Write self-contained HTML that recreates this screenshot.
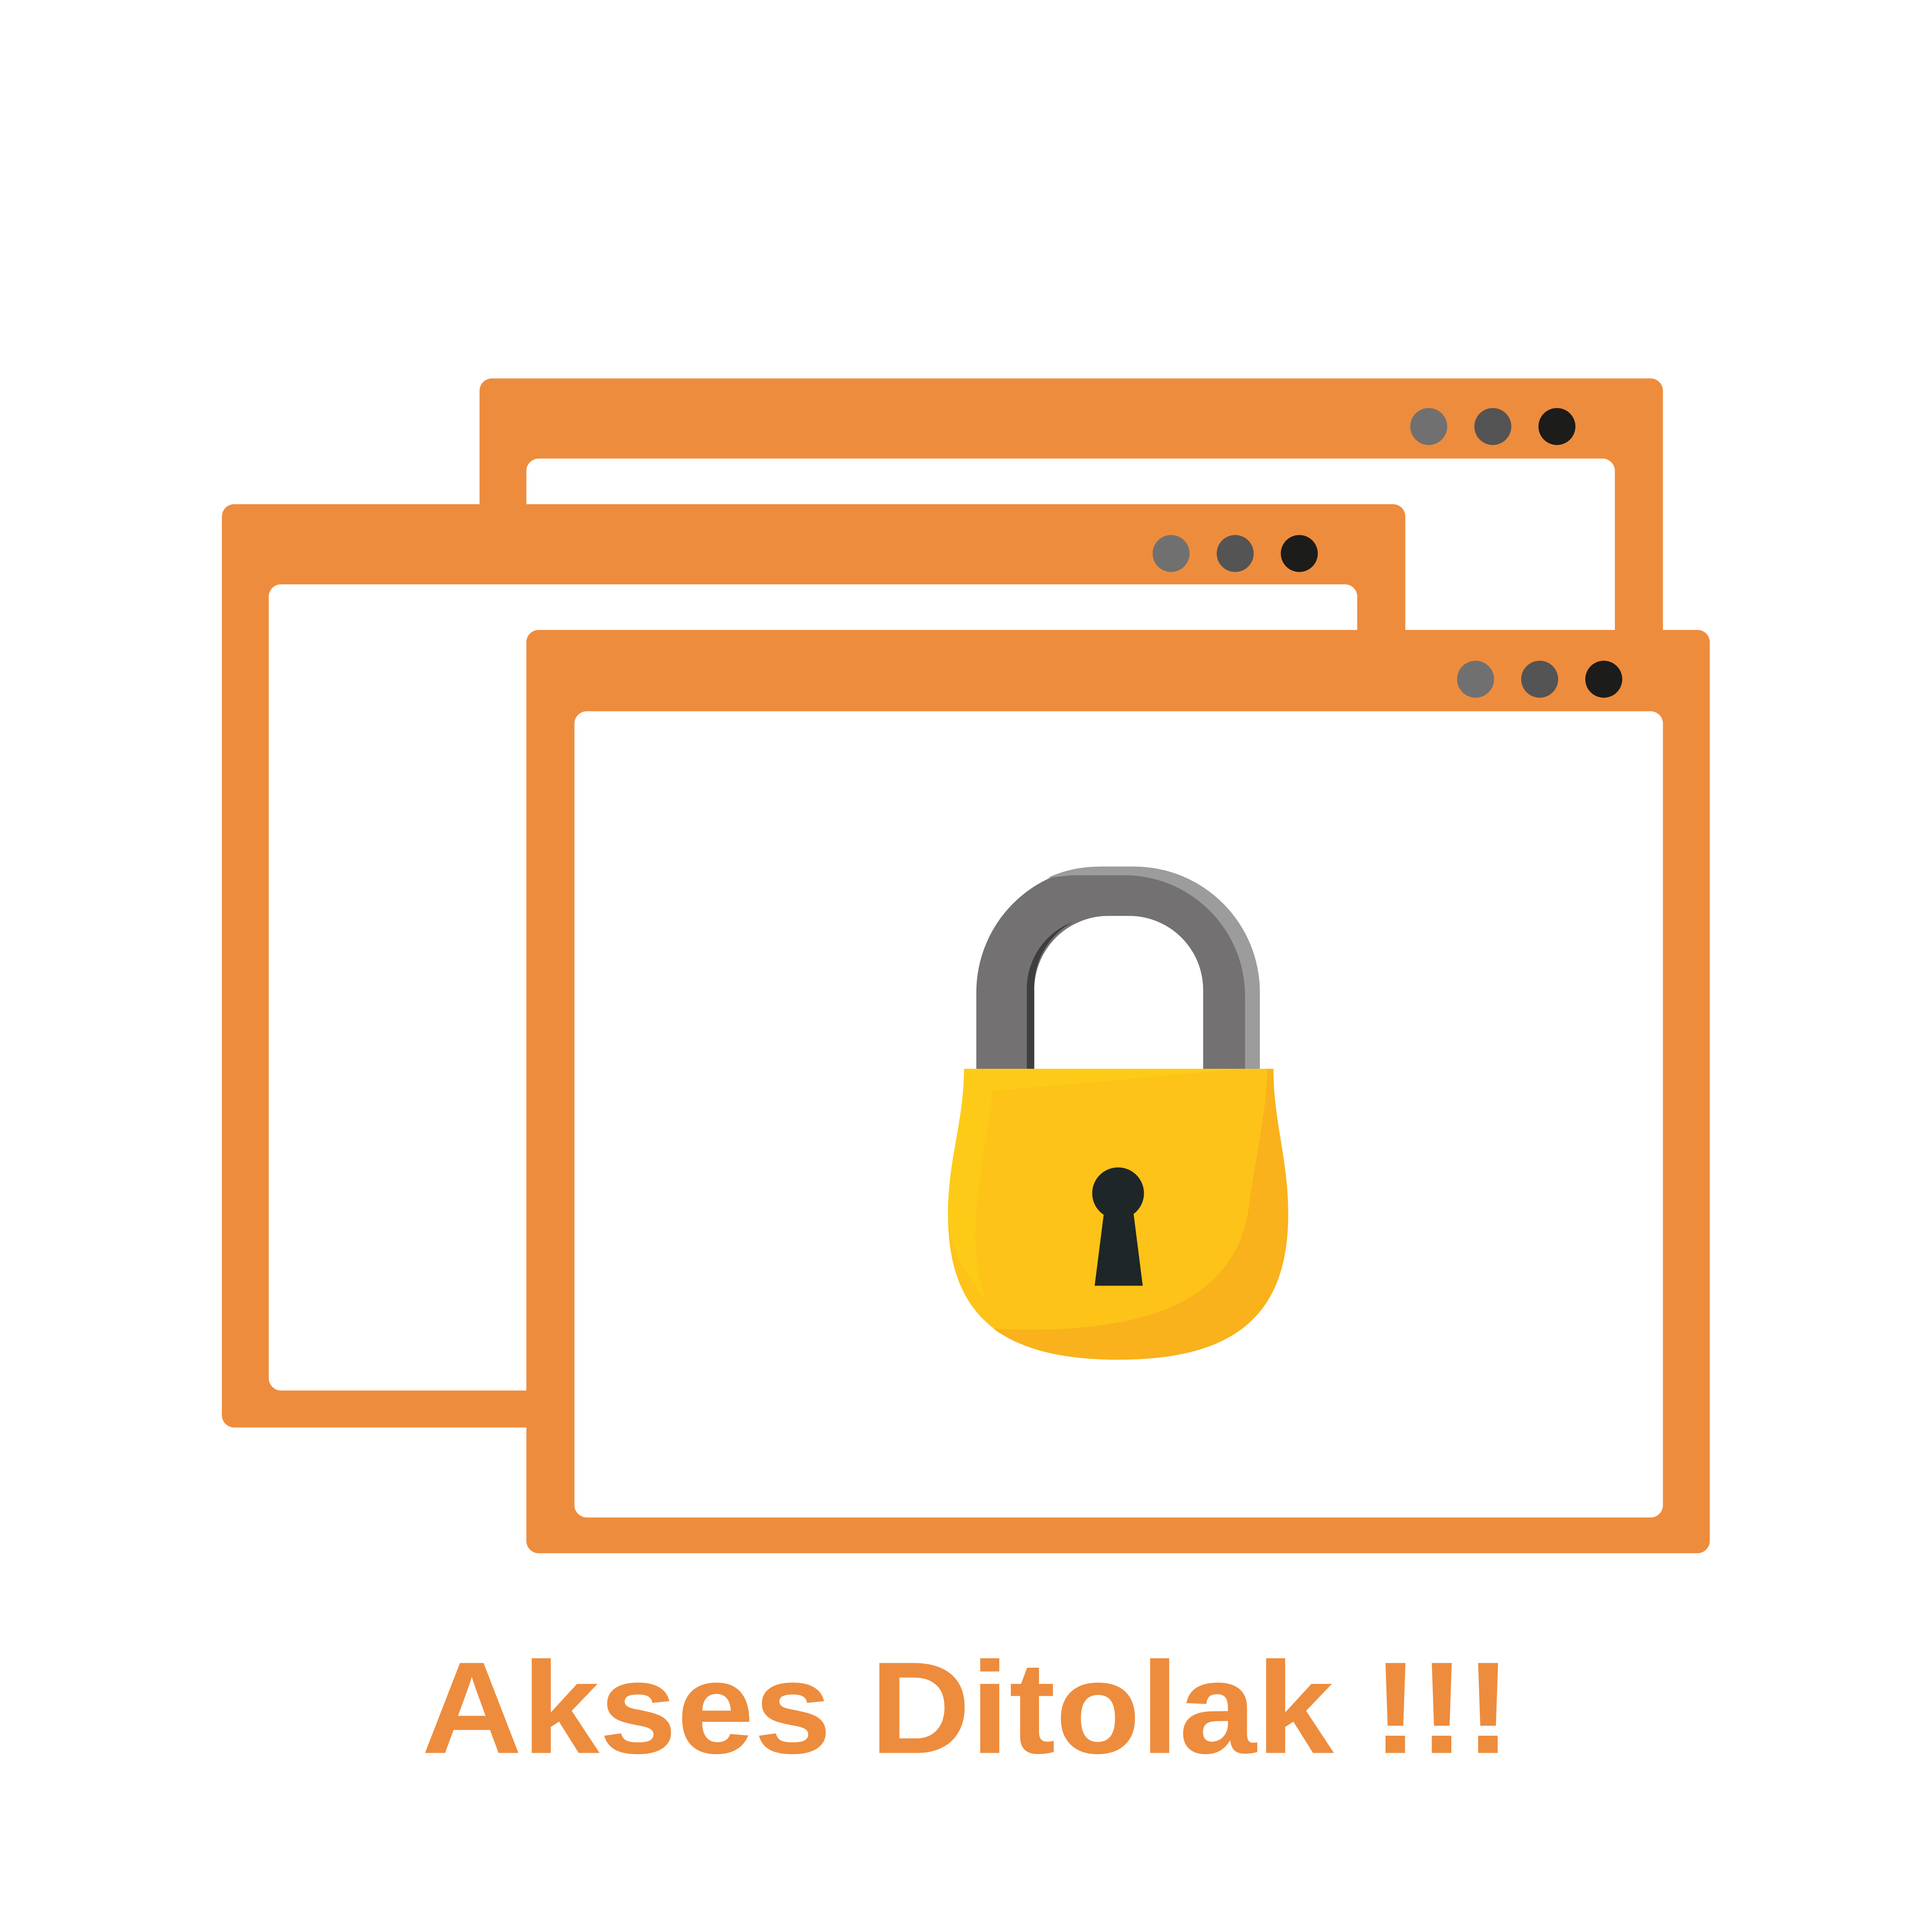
<!DOCTYPE html>
<html><head><meta charset="utf-8"><style>
html,body{margin:0;padding:0;background:#fff;overflow:hidden;width:5315px;height:5315px;}
svg{display:block;position:absolute;left:0;top:0;}
</style></head><body>
<svg width="5315" height="5315" viewBox="0 0 1666 1666" xmlns="http://www.w3.org/2000/svg">
<rect width="1666" height="1666" fill="#fff"/>
<rect x="389" y="307" width="960" height="749" rx="10" fill="#ee8c3d"/>
<rect x="427" y="372" width="883" height="659" rx="10" fill="#fff"/>
<circle cx="1159" cy="346" r="15" fill="#717070"/>
<circle cx="1211" cy="346" r="15" fill="#545454"/>
<circle cx="1263" cy="346" r="15" fill="#1c1c1b"/>
<rect x="180" y="409" width="960" height="749" rx="10" fill="#ee8c3d"/>
<rect x="218" y="474" width="883" height="654" rx="10" fill="#fff"/>
<circle cx="950" cy="449" r="15" fill="#717070"/>
<circle cx="1002" cy="449" r="15" fill="#545454"/>
<circle cx="1054" cy="449" r="15" fill="#1c1c1b"/>
<rect x="427" y="511" width="960" height="749" rx="10" fill="#ee8c3d"/>
<rect x="466" y="577" width="883" height="654" rx="10" fill="#fff"/>
<circle cx="1197" cy="551" r="15" fill="#717070"/>
<circle cx="1249" cy="551" r="15" fill="#545454"/>
<circle cx="1301" cy="551" r="15" fill="#1c1c1b"/>
<path d="M792 870 V805 A102 102 0 0 1 894 703 H920 A102 102 0 0 1 1022 805 V870 H976 V803 A60 60 0 0 0 916 743 H899 A60 60 0 0 0 839 803 V870 Z" fill="#737171"/>
<path d="M850 712 A102 102 0 0 1 894 703 H920 A102 102 0 0 1 1022 805 V870 H1010 V808 A98 98 0 0 0 912 710 H870 Z" fill="#9d9c9c"/>
<path d="M833 870 V800 A58 58 0 0 1 870 748 A60 60 0 0 0 839 803 V870 Z" fill="#3e3e3e"/>
<path d="M782 867 H1033 C1033 910 1045 940 1045 985 C1045 1070 998 1103 907 1103 C816 1103 769 1070 769 985 C769 940 782 910 782 867 Z" fill="#fdc318"/>
<path d="M1033 867 C1033 910 1045 940 1045 985 C1045 1070 998 1103 907 1103 C860 1103 828 1094 806 1078 C900 1082 1000 1070 1013 980 C1018 940 1028 900 1028 867 Z" fill="#f9b21b"/>
<path d="M782 867 H1010 L805 885 C800 940 780 1000 800 1055 C775 1025 769 1000 769 985 C769 940 782 910 782 867 Z" fill="#fdcb17"/>
<circle cx="907" cy="968" r="21" fill="#1f2628"/>
<path d="M896 980 H919 L927 1043 H888 Z" fill="#1f2628"/>
<text x="342" y="1422" font-family="Liberation Sans, Arial, sans-serif" font-weight="bold" font-size="106" fill="#ee8c3d" textLength="884" lengthAdjust="spacingAndGlyphs">Akses Ditolak !!!</text>
</svg>
</body></html>
